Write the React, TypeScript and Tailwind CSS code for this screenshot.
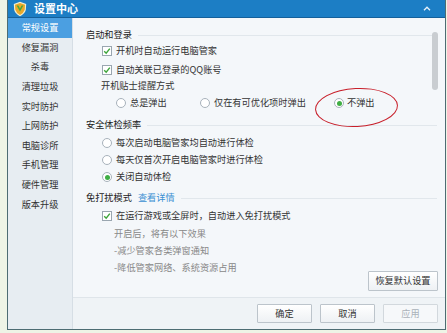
import React from 'react';

const font = { fontFamily: '"Noto Sans CJK SC", "Noto Sans", sans-serif' };

const menu = ['常规设置', '修复漏洞', '杀毒', '清理垃圾', '实时防护', '上网防护', '电脑诊所', '手机管理', '硬件管理', '版本升级'];

const Check: React.FC = () => (
  <span className="w-[10px] h-[10px] border border-[#9aa6b0] bg-white flex items-center justify-center shrink-0">
    <svg width="8" height="8" viewBox="0 0 8 8">
      <path d="M1.2 4.2 L3.2 6.2 L6.8 1.6" stroke="#3da53a" strokeWidth="1.4" fill="none" />
    </svg>
  </span>
);

const Radio: React.FC<{ on?: boolean }> = ({ on }) => (
  <span className="w-[10px] h-[10px] rounded-full border border-[#a8b2bb] bg-white flex items-center justify-center shrink-0">
    {on && <span className="w-[5px] h-[5px] rounded-full bg-[#3fae44]" />}
  </span>
);

const Header: React.FC<{ title: string; link?: string; className?: string }> = ({ title, link, className }) => (
  <div className={`h-[16px] flex items-center gap-[6px] pl-[13px] pr-[8px] text-[#222] ${className ?? ''}`}>
    <span>{title}</span>
    {link && <span className="text-[#3b8fd2]">{link}</span>}
    <span className="flex-1 h-px bg-[#e1e7ec] mt-[1px]" />
  </div>
);

export default function App() {
  return (
    <div className="w-[447px] h-[333px] bg-[#eef4e6] overflow-hidden text-[9.2px] leading-none" style={font}>
      <div className="ml-[7px] w-[439px] h-[330px] border border-[#4d6c73] border-t-0 flex flex-col bg-[#f4f7fa]">
        {/* title bar */}
        <div className="h-[18px] bg-[#1c7ec5] border-b border-[#14609b] flex items-center pl-[4px] pr-[14px] shrink-0">
          <svg width="16" height="16" viewBox="0 0 16 16">
            <path d="M8 0.8 L14.2 3 L13.8 9 Q12.6 13 8 15.3 Q3.4 13 2.2 9 L1.8 3 Z" fill="#f3efd0" />
            <path d="M8 2 L13 3.8 L12.7 8.8 Q11.6 12.2 8 14.1 Q4.4 12.2 3.3 8.8 L3 3.8 Z" fill="#e9a92a" />
            <path d="M4.6 4.6 L8 10.6 L11.4 4.6 L9.6 4.6 L8 7.6 L6.4 4.6 Z" fill="#4aa83c" />
          </svg>
          <span className="ml-[6px] text-white font-bold text-[11px]">设置中心</span>
          <span className="flex-1" />
          <svg width="8" height="5" viewBox="0 0 8 5">
            <path d="M1 4.2 L4 1.2 L7 4.2" stroke="#e8f2fb" strokeWidth="1.3" fill="none" />
          </svg>
        </div>

        <div className="flex flex-1 min-h-0">
          {/* sidebar */}
          <div className="w-[65px] bg-[#e7edf2] border-r border-[#d6dee5] flex flex-col shrink-0">
            {menu.map((m, i) => (
              <div
                key={m}
                className={`h-[19.6px] flex items-center justify-center ${i === 0 ? 'bg-[#4b9fe1] text-white' : 'text-[#333]'}`}
              >
                {m}
              </div>
            ))}
          </div>

          {/* content */}
          <div className="flex-1 flex flex-col relative">
            <div className="flex-1 flex flex-col pt-[9px] text-[#333]">
              <Header title="启动和登录" />
              <div className="h-[16px] flex items-center gap-[4px] pl-[29px]">
                <Check />
                <span>开机时自动运行电脑管家</span>
              </div>
              <div className="h-[16px] mt-[3px] flex items-center gap-[4px] pl-[29px]">
                <Check />
                <span>自动关联已登录的QQ账号</span>
              </div>
              <div className="h-[16px] flex items-center pl-[28px]">开机贴士提醒方式</div>
              <div className="h-[16px] mt-[1px] flex items-center pl-[43px]">
                <div className="w-[84px] flex items-center gap-[4px]">
                  <Radio />
                  <span>总是弹出</span>
                </div>
                <div className="w-[134px] flex items-center gap-[4px]">
                  <Radio />
                  <span>仅在有可优化项时弹出</span>
                </div>
                <div className="flex items-center gap-[3px]">
                  <Radio on />
                  <span>不弹出</span>
                </div>
              </div>

              <Header title="安全体检频率" className="mt-[6px]" />
              <div className="h-[16px] mt-[2px] flex items-center gap-[4px] pl-[29px]">
                <Radio />
                <span>每次启动电脑管家均自动进行体检</span>
              </div>
              <div className="h-[16px] mt-[1px] flex items-center gap-[4px] pl-[29px]">
                <Radio />
                <span>每天仅首次开启电脑管家时进行体检</span>
              </div>
              <div className="h-[16px] mt-[1px] flex items-center gap-[4px] pl-[29px]">
                <Radio on />
                <span>关闭自动体检</span>
              </div>

              <Header title="免打扰模式" link="查看详情" className="mt-[5px]" />
              <div className="h-[16px] mt-[2px] flex items-center gap-[4px] pl-[29px]">
                <Check />
                <span>在运行游戏或全屏时，自动进入免打扰模式</span>
              </div>
              <div className="pl-[41px] text-[#888] flex flex-col">
                <div className="h-[16px] mt-[2px] flex items-center">开启后，将有以下效果</div>
                <div className="h-[16px] mt-[1px] flex items-center">-减少管家各类弹窗通知</div>
                <div className="h-[16px] mt-[1px] flex items-center">-降低管家网络、系统资源占用</div>
              </div>
              <div className="flex justify-end pr-[7px] -mt-[5px]">
                <button className="w-[70px] h-[20px] border border-[#bcc4cb] bg-gradient-to-b from-white to-[#eef1f4] text-[#333] rounded-[1px]">
                  恢复默认设置
                </button>
              </div>
            </div>

            {/* footer */}
            <div className="h-[32px] border-t border-[#dfe5ea] bg-[#eff3f6] flex items-center justify-end gap-[8px] pr-[7px] shrink-0">
              <button className="w-[55px] h-[19px] border border-[#bcc4cb] bg-gradient-to-b from-white to-[#eef1f4] text-[#333] rounded-[1px]">确定</button>
              <button className="w-[55px] h-[19px] border border-[#bcc4cb] bg-gradient-to-b from-white to-[#eef1f4] text-[#333] rounded-[1px]">取消</button>
              <button className="w-[55px] h-[19px] border border-[#d2d8dd] bg-[#f6f8fa] text-[#aab2b9] rounded-[1px]">应用</button>
            </div>

            {/* scrollbar */}
            <div className="absolute right-[7px] top-[14px] w-[6px] h-[58px] rounded-[3px] bg-[#c9cdd1]" />
            {/* red annotation ellipse */}
            <div className="absolute left-[242px] top-[70px] w-[83px] h-[39px] rounded-[50%] border-[1.5px] border-[#c8202b] -rotate-[3deg]" />
          </div>
        </div>
      </div>
    </div>
  );
}
